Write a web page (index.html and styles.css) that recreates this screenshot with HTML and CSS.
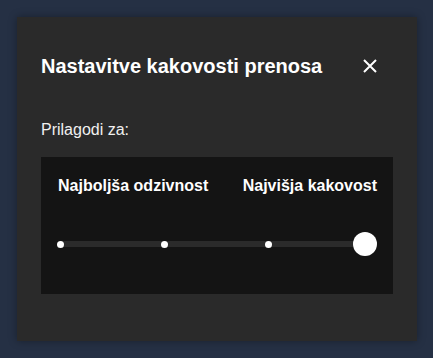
FILE: index.html
```html
<!DOCTYPE html>
<html lang="sl">
<head>
  <meta charset="UTF-8">
  <title>Nastavitve kakovosti prenosa</title>
  <link rel="stylesheet" href="styles.css">
</head>
<body>

  <div class="dialog">
    <div class="dialog-head">
      <h1>Nastavitve kakovosti prenosa</h1>
      <button class="close" aria-label="Zapri">
        <svg width="14" height="14" viewBox="0 0 14 14">
          <path d="M1 1 L13 13 M13 1 L1 13" stroke="#fff" stroke-width="2" fill="none"/>
        </svg>
      </button>
    </div>

    <p class="prompt">Prilagodi za:</p>

    <div class="panel">
      <div class="labels">
        <span>Najboljša odzivnost</span>
        <span>Najvišja kakovost</span>
      </div>
      <div class="slider">
        <span class="dot"></span>
        <span class="dot"></span>
        <span class="dot"></span>
        <span class="knob"></span>
      </div>
    </div>
  </div>

</body>
</html>
```

FILE: styles.css
```css
body {
  margin: 0;
  background: #253044;
  font-family: "Liberation Sans", Arial, sans-serif;
  color: #fff;
}
.dialog {
  margin: 17px;
  width: 400px;
  height: 324px;
  box-sizing: border-box;
  background: #2a2a2a;
  padding: 24px 24px;
  box-shadow: 0 0 8px rgba(0, 0, 0, 0.35);
}
.dialog-head {
  display: flex;
  justify-content: space-between;
  align-items: center;
  height: 50px;
}
.dialog-head h1 {
  margin: 0;
  font-size: 20px;
  font-weight: bold;
}
.close {
  background: none;
  border: none;
  padding: 0;
  margin-right: 16px;
  display: flex;
  cursor: pointer;
}
.prompt {
  margin: 30px 0 18px;
  font-size: 16px;
  color: #f0f0f0;
}
.panel {
  background: #141414;
  height: 137px;
  box-sizing: border-box;
  padding: 20px 16px 0 16px;
}
.labels {
  display: flex;
  justify-content: space-between;
  padding-left: 1px;
  font-size: 16px;
  font-weight: bold;
}
.slider {
  position: relative;
  display: flex;
  align-items: center;
  margin: 37px 0 0 0;
  height: 24px;
}
.slider::before {
  content: "";
  position: absolute;
  left: 3px;
  right: 12px;
  top: 9px;
  height: 6px;
  background: #2b2b2b;
}
.dot {
  position: relative;
  flex-shrink: 0;
  width: 7px;
  height: 7px;
  margin-right: 97px;
  border-radius: 50%;
  background: #fff;
}
.dot:nth-child(3) {
  margin-right: 0;
}
.knob {
  position: relative;
  flex-shrink: 0;
  margin-left: auto;
  width: 24px;
  height: 24px;
  border-radius: 50%;
  background: #fff;
}
```
